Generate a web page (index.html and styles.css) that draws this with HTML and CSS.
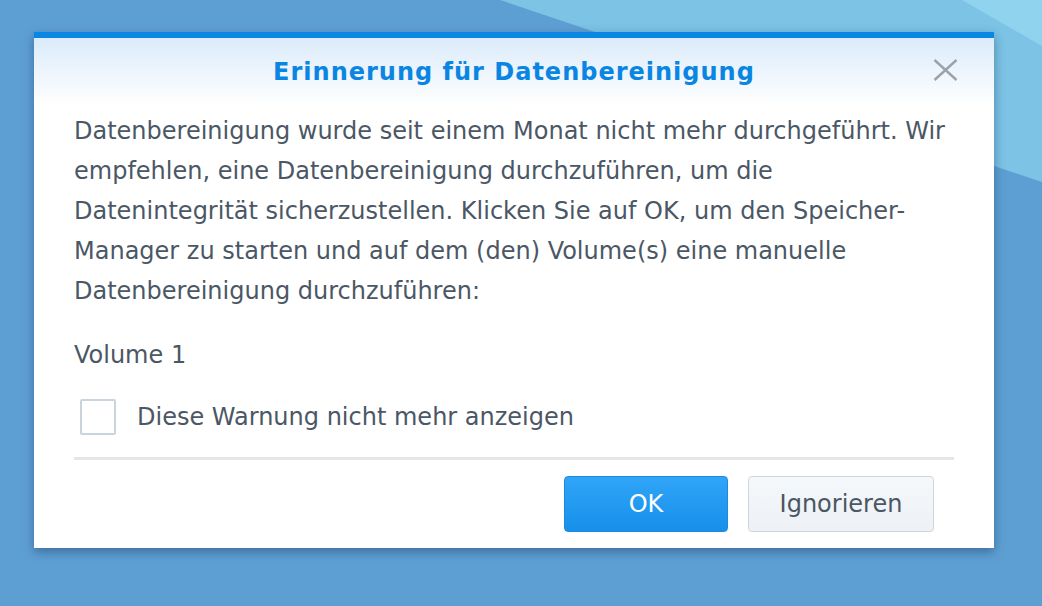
FILE: index.html
```html
<!DOCTYPE html>
<html lang="de">
<head>
<meta charset="utf-8">
<title>Erinnerung für Datenbereinigung</title>
<link rel="stylesheet" href="styles.css">
</head>
<body>
<div class="desktop">
  <svg class="wallpaper" width="1042" height="606" viewBox="0 0 1042 606" aria-hidden="true">
    <rect width="1042" height="606" fill="#5e9fd3"/>
    <polygon points="500,0 1042,0 1042,182" fill="#7cc3e5"/>
    <polygon points="962,0 1042,0 1042,46" fill="#8fd3ee"/>
  </svg>
  <div class="dialog">
    <div class="dialog-header">
      <h1 class="dialog-title">Erinnerung für Datenbereinigung</h1>
      <button class="close" aria-label="Schließen">
        <svg width="25" height="22" viewBox="0 0 25 22"><path d="M1.5 1 L23.5 21 M23.5 1 L1.5 21" stroke="#9aa2ab" stroke-width="2.4" fill="none"/></svg>
      </button>
    </div>
    <div class="dialog-body">
      <p class="message">Datenbereinigung wurde seit einem Monat nicht mehr durchgeführt. Wir empfehlen, eine Datenbereinigung durchzuführen, um die Datenintegrität sicherzustellen. Klicken Sie auf OK, um den Speicher-Manager zu starten und auf dem (den) Volume(s) eine manuelle Datenbereinigung durchzuführen:</p>
      <p class="volume">Volume 1</p>
      <label class="check-row"><span class="checkbox"></span><span>Diese Warnung nicht mehr anzeigen</span></label>
    </div>
    <div class="dialog-footer">
      <button class="btn btn-primary">OK</button>
      <button class="btn btn-default">Ignorieren</button>
    </div>
  </div>
</div>
</body>
</html>
```
FILE: styles.css
```css
html, body {
  margin: 0;
  padding: 0;
}
body {
  width: 1042px;
  height: 606px;
  overflow: hidden;
  font-family: "DejaVu Sans", Verdana, sans-serif;
  color: #4b5765;
}
.desktop {
  position: relative;
  width: 1042px;
  height: 606px;
  padding: 32px 0 0 34px;
  box-sizing: border-box;
}
.wallpaper {
  position: absolute;
  left: 0;
  top: 0;
}
.dialog {
  position: relative;
  width: 960px;
  height: 516px;
  background: #fff;
  border-top: 6px solid #0a87e5;
  box-sizing: border-box;
  box-shadow: 0 4px 10px rgba(20, 50, 90, 0.45);
  display: flex;
  flex-direction: column;
}
.dialog-header {
  height: 68px;
  background: linear-gradient(#dbebfa, #ffffff);
  display: flex;
  align-items: center;
  justify-content: center;
  position: relative;
}
.dialog-title {
  margin: 0;
  font-size: 24px;
  font-weight: bold;
  letter-spacing: 1px;
  color: #0a86e2;
}
.close {
  position: absolute;
  right: 36px;
  top: 21px;
  padding: 0;
  border: 0;
  background: none;
  width: 25px;
  height: 22px;
}
.close svg { display: block; }
.dialog-body {
  padding: 5px 40px 0 40px;
  font-size: 24px;
  line-height: 40px;
}
.message {
  margin: 0;
}
.volume {
  margin: 24px 0 0 0;
}
.check-row {
  display: flex;
  align-items: center;
  gap: 21px;
  margin: 22px 0 0 6px;
  height: 40px;
}
.checkbox {
  width: 32px;
  height: 32px;
  border: 2px solid #c9d4df;
  border-radius: 2px;
  background: #fff;
}
.dialog-footer {
  margin: 20px 40px 0 40px;
  border-top: 3px solid #e6e6e6;
  padding: 16px 20px 0 0;
  display: flex;
  justify-content: flex-end;
  gap: 20px;
}
.btn {
  height: 56px;
  border-radius: 4px;
  font-family: "DejaVu Sans", Verdana, sans-serif;
  font-size: 24px;
  padding: 0;
}
.btn-primary {
  width: 164px;
  color: #fff;
  background: linear-gradient(#30a5f8, #1690ea);
  border: 1px solid #1c8ae0;
}
.btn-default {
  width: 186px;
  color: #4b5765;
  background: linear-gradient(#f5f8fb, #edf1f5);
  border: 1px solid #cdd6df;
}
```
